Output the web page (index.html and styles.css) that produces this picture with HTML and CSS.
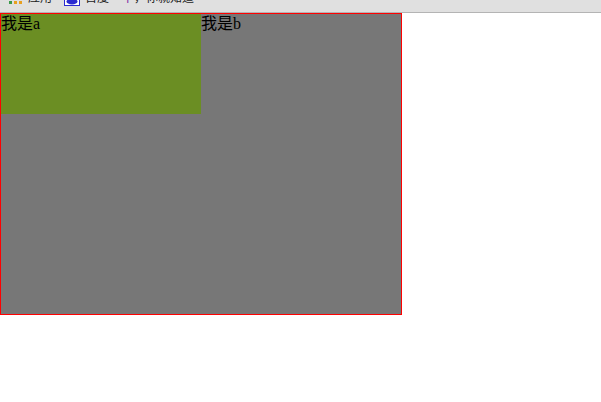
FILE: index.html
```html
<!DOCTYPE html>
<html lang="en">
<head>
  <meta charset="UTF-8" />
  <title>float demo</title>
  <link rel="stylesheet" href="styles.css">
</head>
<body>
  <!-- bookmarks bar, cut off by the top of the window -->
  <div class="bookmarks">
    <span class="bookmark">
      <svg class="apps-icon" width="14" height="4" viewBox="0 0 14 4">
        <rect x="0" y="0" width="3" height="3" fill="#3a9a4a"/>
        <rect x="5" y="0" width="3" height="3" fill="#e8a020"/>
        <rect x="10" y="0" width="3" height="3" fill="#e8a020"/>
      </svg>
      应用
    </span>
    <span class="bookmark">
      <svg class="baidu-icon" width="16" height="6" viewBox="0 0 16 6">
        <rect x="0.5" y="-6" width="15" height="11.5" fill="#fff" stroke="#2a2ad0"/>
        <ellipse cx="8" cy="1.5" rx="5.5" ry="3" fill="#2a2ad0"/>
      </svg>
      百度
    </span>
    <span class="bookmark">
      <span class="paw">下</span><span>，你就知道</span>
    </span>
  </div>

  <div class="box">
    <div class="a">我是a</div>
    <div class="b">我是b</div>
  </div>
</body>
</html>
```

FILE: styles.css
```css
html, body {
  margin: 0;
  padding: 0;
  background: #fff;
  overflow: hidden;
}

body {
  font-family: "Liberation Serif", "Noto Sans CJK SC", serif;
  font-size: 16px;
  line-height: 20px;
  color: #000;
}

.bookmarks {
  height: 12px;
  background: #e0e0e0;
  border-bottom: 1px solid #b4b4b4;
  display: flex;
  align-items: flex-start;
  gap: 12px;
  padding-left: 9px;
  overflow: hidden;
  font-family: "Noto Sans CJK SC", sans-serif;
  font-size: 12px;
  line-height: 14px;
  color: #222;
}

.bookmark {
  display: flex;
  align-items: flex-start;
  gap: 5px;
  white-space: nowrap;
  margin-top: -10px;
}

.apps-icon {
  margin-top: 11px;
}

.baidu-icon {
  margin-top: 10px;
}

.paw {
  color: #7a1fa0;
  margin-left: 1px;
  margin-right: -5px;
}

.box {
  width: 400px;
  height: 300px;
  border: 1px solid #f00;
  background: #777;
}

.a {
  float: left;
  width: 200px;
  height: 100px;
  background: #6b8e23;
}

.b {
  height: 100px;
}
```
